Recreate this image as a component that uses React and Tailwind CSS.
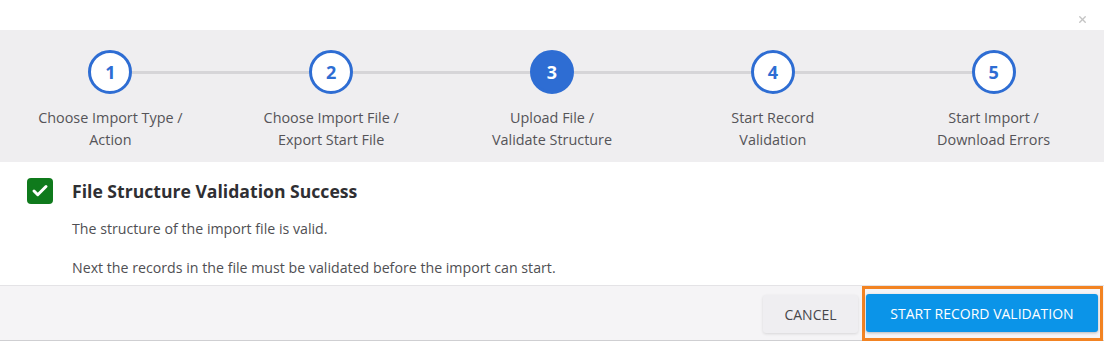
import { Check, X } from 'lucide-react';

const STEPS = [
  { n: 1, label: ['Choose Import Type /', 'Action'] },
  { n: 2, label: ['Choose Import File /', 'Export Start File'] },
  { n: 3, label: ['Upload File /', 'Validate Structure'], active: true },
  { n: 4, label: ['Start Record', 'Validation'] },
  { n: 5, label: ['Start Import /', 'Download Errors'] },
];

function Step({ step, first, last }) {
  return (
    <div className="flex flex-col items-center">
      <div className="flex w-full items-center">
        <div className={first ? 'flex-1' : 'h-[3px] flex-1 bg-[#d6d5d8]'} />
        <div
          className={
            step.active
              ? 'flex h-[44px] w-[44px] items-center justify-center rounded-full border-[3px] border-[#2e6dd3] bg-[#2e6dd3] text-[18px] font-bold text-white'
              : 'flex h-[44px] w-[44px] items-center justify-center rounded-full border-[3px] border-[#2e6dd3] bg-white text-[18px] font-bold text-[#2e6dd3]'
          }
        >
          {step.n}
        </div>
        <div className={last ? 'flex-1' : 'h-[3px] flex-1 bg-[#d6d5d8]'} />
      </div>
      <div className="mt-[13px] text-center text-[14.4px] leading-[22px] text-[#555458]">
        <div>{step.label[0]}</div>
        <div>{step.label[1]}</div>
      </div>
    </div>
  );
}

export default function App() {
  return (
    <div className="h-[341px] w-[1104px] overflow-hidden bg-white font-['Open_Sans',sans-serif]">
      {/* Header */}
      <div className="flex h-[30px] items-end justify-end pr-[16px] pb-[5px]">
        <X className="h-[11px] w-[11px] text-[#c4c4c4]" strokeWidth={3} />
      </div>

      {/* Stepper */}
      <div className="grid h-[132px] grid-cols-5 bg-[#efeef0] pt-[20px]">
        {STEPS.map((s, i) => (
          <Step key={s.n} step={s} first={i === 0} last={i === STEPS.length - 1} />
        ))}
      </div>

      {/* Body */}
      <div className="h-[123px] pl-[27px] pt-[16px]">
        <div className="flex items-center gap-[19px]">
          <div className="flex h-[26px] w-[26px] items-center justify-center rounded-[4px] bg-[#0f7a1c]">
            <Check className="h-[18px] w-[18px] text-white" strokeWidth={4} />
          </div>
          <div className="text-[17.6px] font-bold text-[#2f2f33]">File Structure Validation Success</div>
        </div>
        <div className="pl-[45px]">
          <p className="mt-[15px] text-[14.2px] leading-[20px] text-[#4f4f53]">The structure of the import file is valid.</p>
          <p className="mt-[19px] text-[14.2px] leading-[20px] text-[#4f4f53]">
            Next the records in the file must be validated before the import can start.
          </p>
        </div>
      </div>

      {/* Footer */}
      <div className="flex h-[56px] items-start justify-end border-t border-b border-[#e4e3e6] border-b-[#cfcfd2] bg-[#f5f4f6]">
        <button className="mt-[9px] mr-[4px] h-[38px] w-[95px] rounded-[3px] bg-[#efeef1] text-[14px] text-[#48474b] shadow-[0_1px_3px_rgba(0,0,0,0.12)]">
          CANCEL
        </button>
        <div className="mr-[1px] h-[55px] border-[3px] border-[#f28322] pt-[5px] pr-[2px] pl-[1px]">
          <button className="h-[38px] w-[232px] rounded-[3px] bg-[#0b94e8] text-[14px] text-white shadow-[0_1px_3px_rgba(0,0,0,0.25)]">
            START RECORD VALIDATION
          </button>
        </div>
      </div>
    </div>
  );
}
